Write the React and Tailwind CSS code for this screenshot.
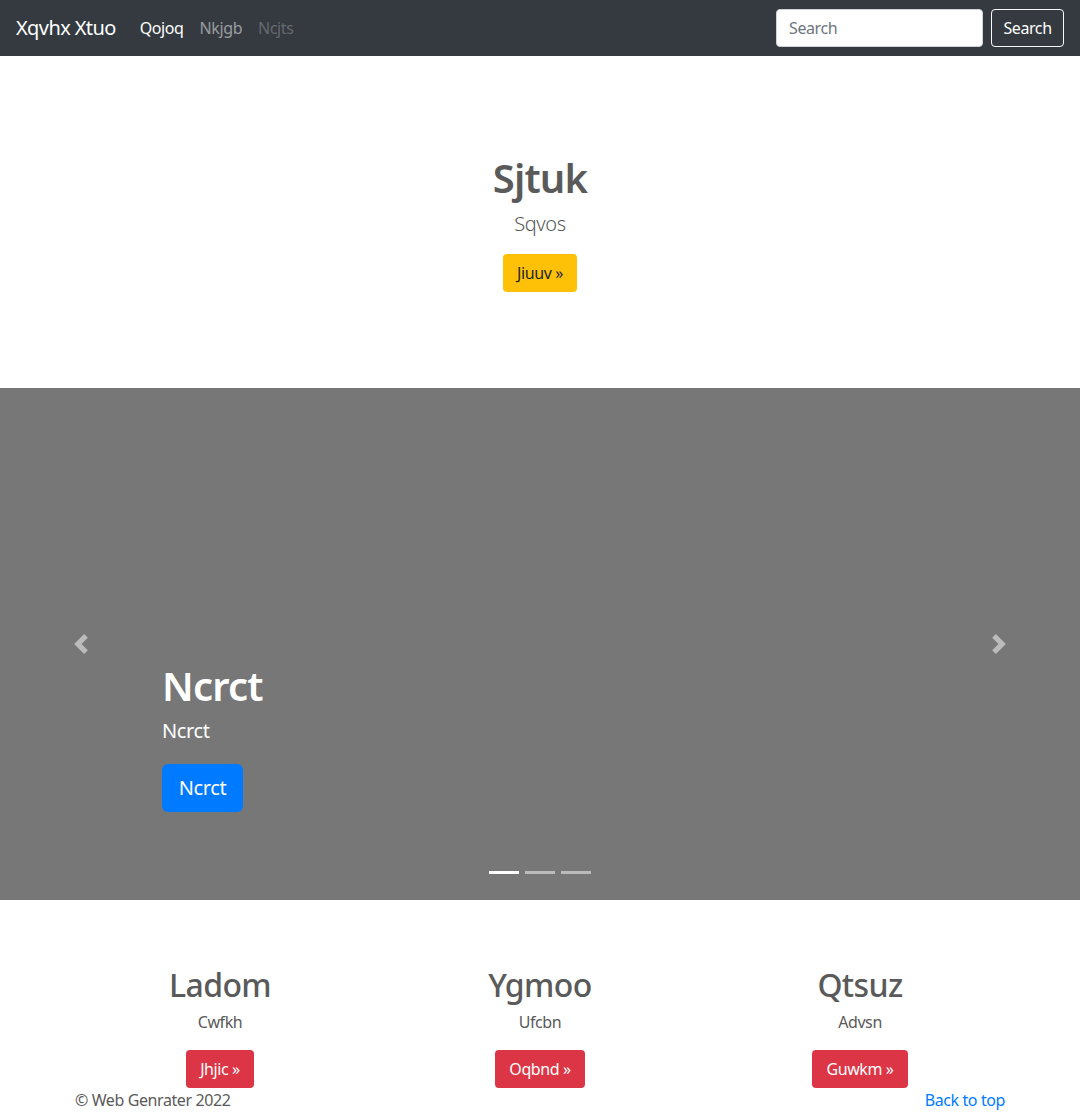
import React from "react";

const font = { fontFamily: '"Noto Sans", "Open Sans", sans-serif' };

function Chevron({ dir }) {
  const d =
    dir === "prev"
      ? "M5.25 0l-4 4 4 4 1.5-1.5L4.25 4l2.5-2.5L5.25 0z"
      : "M2.75 0l-1.5 1.5L3.75 4l-2.5 2.5L2.75 8l4-4-4-4z";
  return (
    <svg width="20" height="20" viewBox="0 0 8 8" className="opacity-50">
      <path d={d} fill="#fff" />
    </svg>
  );
}

const columns = [
  { title: "Ladom", text: "Cwfkh", btn: "Jhjic »" },
  { title: "Ygmoo", text: "Ufcbn", btn: "Oqbnd »" },
  { title: "Qtsuz", text: "Advsn", btn: "Guwkm »" },
];

export default function App() {
  return (
    <div className="w-[1080px] h-[1112px] overflow-hidden bg-white text-[#5a5a5a] text-[16px] tracking-[-0.4px]" style={font}>
      {/* navbar */}
      <nav className="h-[56px] bg-[#343a40] flex items-center px-4">
        <span className="text-[20px] text-white mr-4 tracking-[-0.6px]">Xqvhx Xtuo</span>
        <ul className="flex">
          <li className="px-2 text-white">Qojoq</li>
          <li className="px-2 text-white/50">Nkjgb</li>
          <li className="px-2 text-white/25">Ncjts</li>
        </ul>
        <div className="ml-auto flex items-center">
          <div className="w-[207px] h-[38px] bg-white rounded border border-[#ced4da] px-3 flex items-center text-[#6c757d]">
            Search
          </div>
          <button className="ml-2 w-[73px] h-[38px] rounded border border-[#f8f9fa] text-white">Search</button>
        </div>
      </nav>

      {/* jumbotron */}
      <section className="h-[332px] flex flex-col items-center pt-[98px]">
        <h1 className="text-[40px] leading-[48px] font-semibold tracking-[-0.8px]">Sjtuk</h1>
        <p className="mt-[7px] text-[20px] leading-[30px] font-light">Sqvos</p>
        <button className="mt-[15px] h-[38px] w-[74px] rounded bg-[#ffc107] text-[#212529]">Jiuuv »</button>
      </section>

      {/* carousel */}
      <section className="relative h-[512px] bg-[#777] flex flex-col justify-end pl-[162px] pb-[88px] text-white">
        <h1 className="text-[40px] leading-[48px] font-semibold tracking-[-0.8px]">Ncrct</h1>
        <p className="mt-[6px] text-[20px] leading-[30px]">Ncrct</p>
        <div className="mt-[18px]">
          <button className="h-[48px] w-[81px] rounded-md bg-[#007bff] text-[20px] text-white">Ncrct</button>
        </div>
        <div className="absolute left-[71px] top-[246px]">
          <Chevron dir="prev" />
        </div>
        <div className="absolute right-[71px] top-[246px]">
          <Chevron dir="next" />
        </div>
        <div className="absolute bottom-[26px] left-0 right-0 flex justify-center gap-[6px]">
          <span className="w-[30px] h-[3px] bg-white" />
          <span className="w-[30px] h-[3px] bg-white/50" />
          <span className="w-[30px] h-[3px] bg-white/50" />
        </div>
      </section>

      {/* marketing */}
      <section className="w-[960px] mx-auto pt-[66px] grid grid-cols-3">
        {columns.map((c) => (
          <div key={c.title} className="flex flex-col items-center px-[15px]">
            <h2 className="text-[32px] leading-[38px] font-medium tracking-[-0.6px]">{c.title}</h2>
            <p className="mt-[6px] leading-[24px]">{c.text}</p>
            <button className="mt-[16px] h-[38px] px-[14px] rounded bg-[#dc3545] text-white">{c.btn}</button>
          </div>
        ))}
      </section>

      {/* footer */}
      <footer className="w-[960px] mx-auto px-[15px] flex justify-between leading-[24px]">
        <span>© Web Genrater 2022</span>
        <span className="text-[#007bff]">Back to top</span>
      </footer>
    </div>
  );
}
